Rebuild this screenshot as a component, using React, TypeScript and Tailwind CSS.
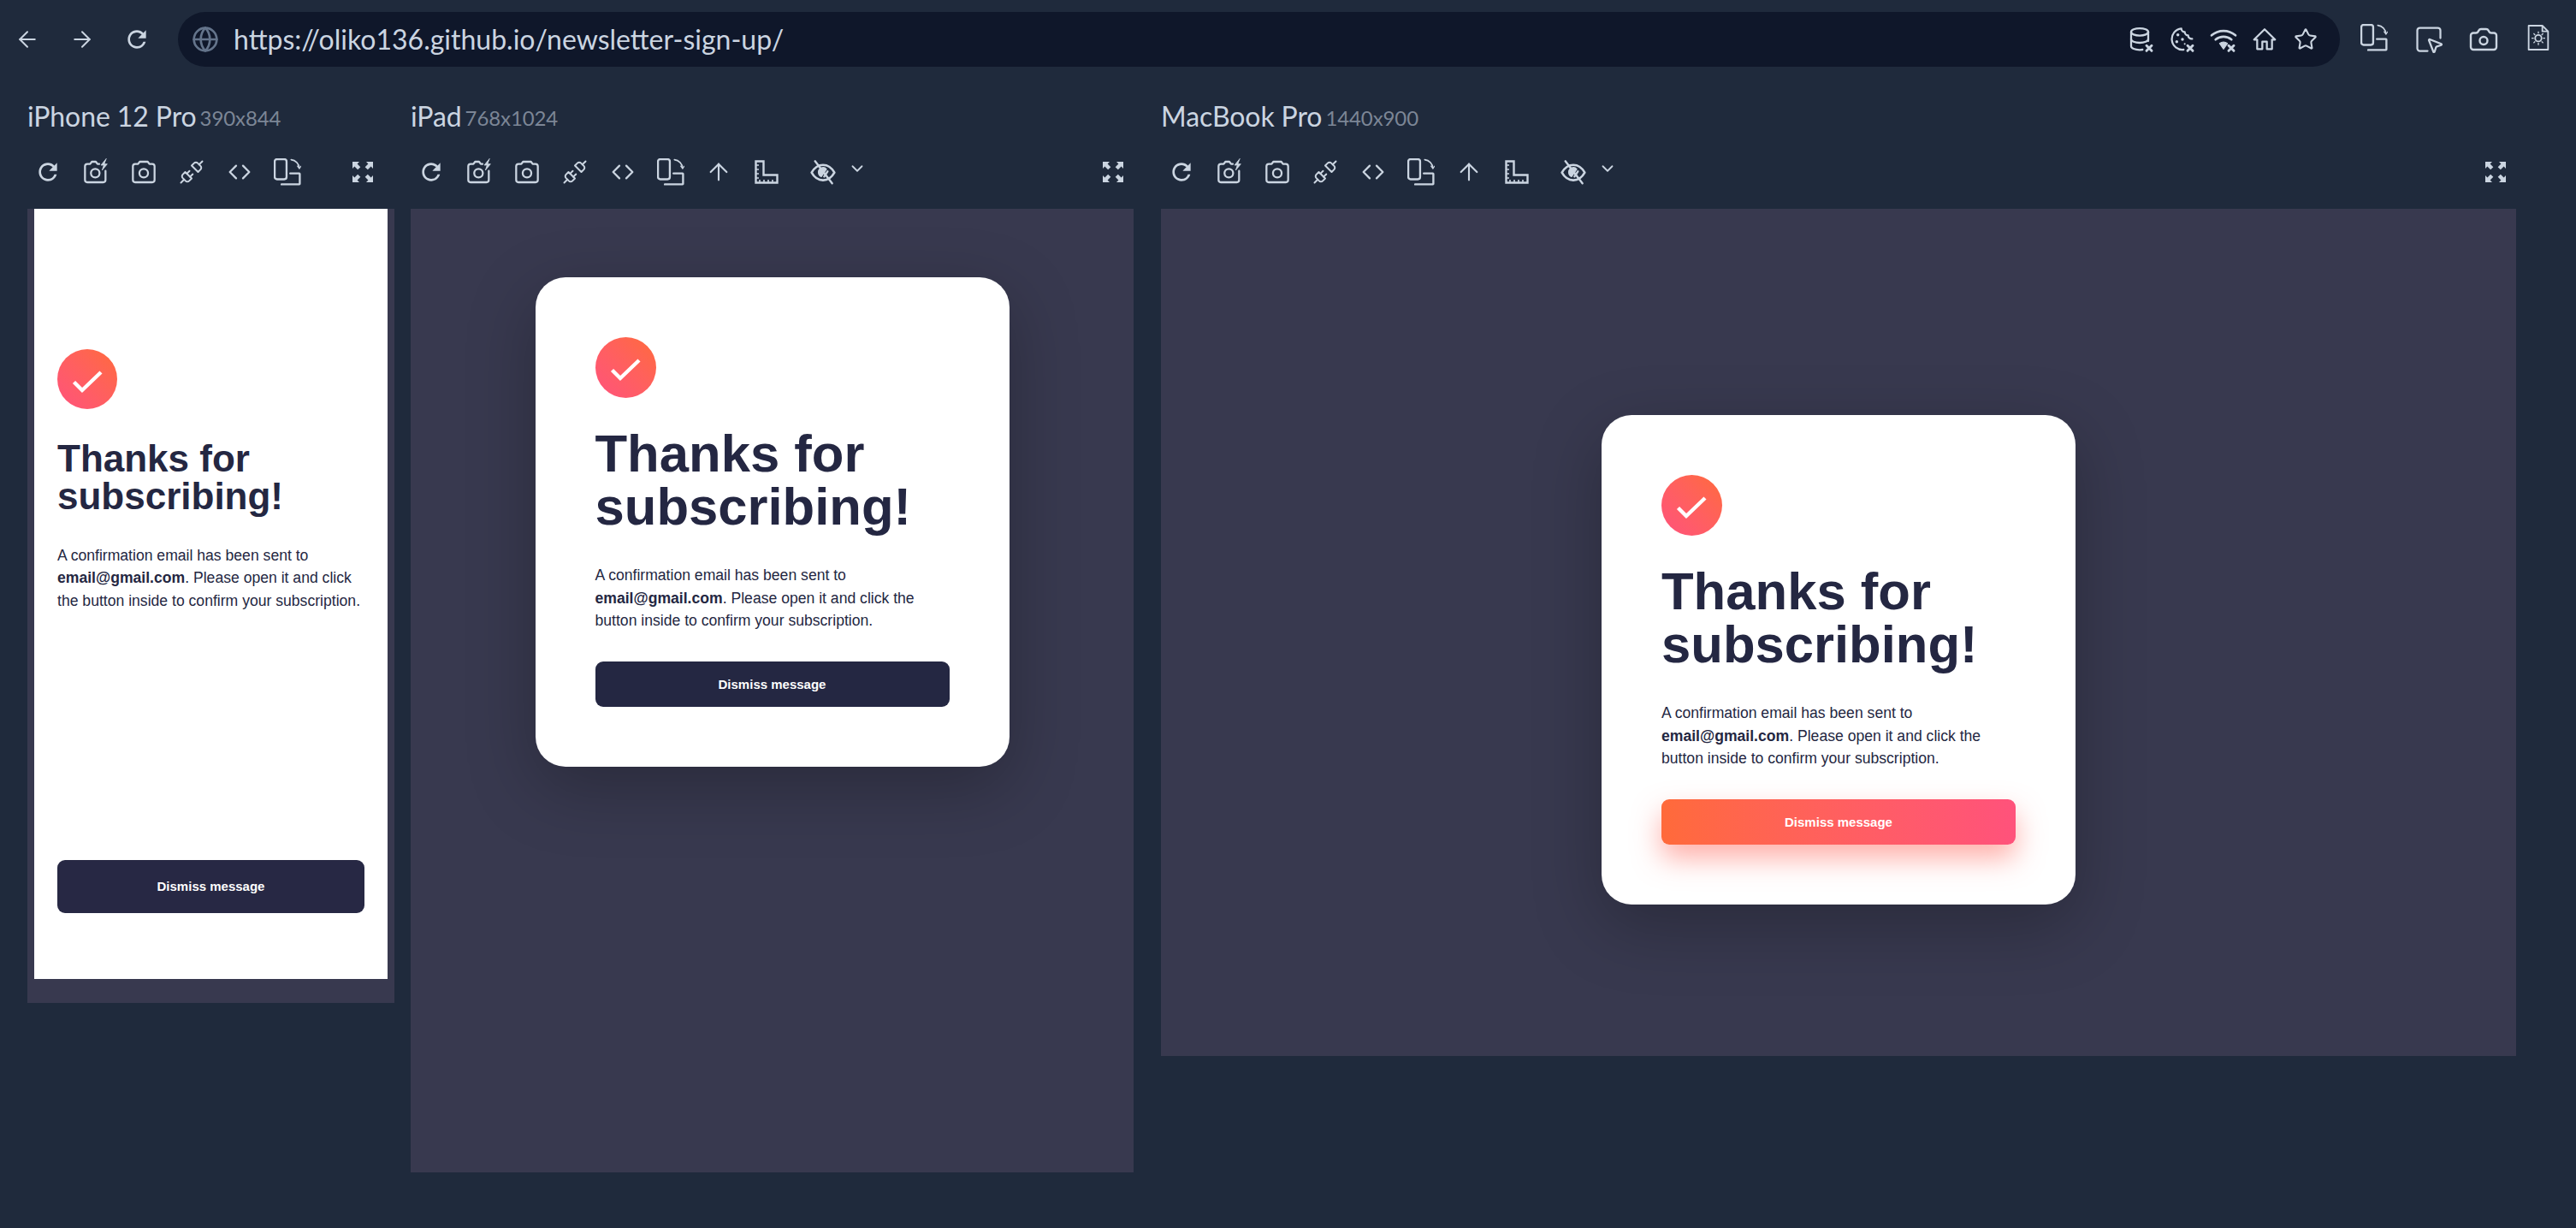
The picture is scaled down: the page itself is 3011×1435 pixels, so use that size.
import type { ReactNode } from "react";
import { ArrowLeft, ArrowRight, ArrowUp, Camera, ChevronDown, Globe, SquareMousePointer, Star, Unplug } from "lucide-react";
import { MdRefresh } from "react-icons/md";

const Svg = ({ size = 32, children }: { size?: number; children: ReactNode }) => (
  <svg
    width={size}
    height={size}
    viewBox="0 0 24 24"
    fill="none"
    stroke="currentColor"
    strokeWidth={1.7}
    strokeLinecap="round"
    strokeLinejoin="round"
  >
    {children}
  </svg>
);

const RemoveMark = () => <path d="M16.5 17.5l4.5 4.5m0-4.5L16.5 22" strokeWidth={2.2} />;

const CameraFlash = () => (
  <Svg>
    <path d="M15 5h-1.5L12 3h-3.500L7 5H4.500A2 2 0 0 0 2.500 7v12a2 2 0 0 0 2 2h14a2 2 0 0 0 2-2v-8" />
    <circle cx="11.500" cy="13" r="3.800" />
    <path d="M21 0.500 16.500 6H19l-1.500 4.500L22 5h-2.500z" fill="currentColor" strokeWidth={0.6} />
  </Svg>
);

const CameraTool = () => (
  <Svg>
    <path d="M4.500 5H7l1.500-2h7L17 5h2.500a2 2 0 0 1 2 2v12a2 2 0 0 1-2 2h-15a2 2 0 0 1-2-2V7a2 2 0 0 1 2-2Z" />
    <circle cx="12" cy="13" r="3.800" />
  </Svg>
);

const CodeIcon = () => (
  <Svg>
    <path d="M9 6.500 3.500 12 9 17.500" />
    <path d="M15 6.500l5.500 5.500-5.500 5.500" />
  </Svg>
);

const RotateDevice = ({ size = 32 }: { size?: number }) => (
  <svg width={size} height={size} viewBox="0 0 30 30" fill="none" stroke="currentColor" strokeWidth={2.2} strokeLinecap="round" strokeLinejoin="round">
    <rect x="1" y="1" width="13" height="22" rx="2.500" />
    <path d="M18 16.500h10a0.500 0.500 0 0 1 .5.5v11a0.500 0.500 0 0 1-.5.5H8.500" />
    <path d="M19 1.500a10 10 0 0 1 9 9.500" strokeWidth={1.5} />
    <path d="M26 8.500l2 2.500 2-2.500" strokeWidth={1.2} />
  </svg>
);

const RulerSquare = () => (
  <svg width="28" height="28" viewBox="0 0 28 28" fill="none" stroke="currentColor" strokeWidth={2.4} strokeLinejoin="miter">
    <path d="M1.500 1.500H10.500V17.500H26.500V26.500H1.500Z" />
    <path d="M2 6H5M2 11H5M2 16H5M2 21H5M6 26V23M11 26V23M16 26V23M21 26V23" strokeWidth={1.6} />
  </svg>
);

const EyeOff = () => (
  <Svg>
    <path d="M2 12.500C4.500 8 8 5.800 12 5.800S19.500 8 22 12.500C19.500 17 16 19.200 12 19.200S4.500 17 2 12.500Z" strokeWidth={2} />
    <path d="M8 12.500a4 4 0 0 1 7-3l-4.500 6.500a4 4 0 0 1-2.500-3.500Z" fill="currentColor" strokeWidth={1} />
    <path d="M13 16l3-4.500" strokeWidth={1.8} />
    <path d="M5 2.500l15 19.500" strokeWidth={1.8} />
  </Svg>
);

const Expand = () => (
  <svg width="32" height="32" viewBox="0 0 24 24" fill="currentColor" stroke="none">
    <path d="M3 3h6L7.200 4.800 10 7.600 7.600 10 4.800 7.200 3 9z" />
    <path d="M21 3h-6l1.800 1.800L14 7.600 16.400 10l2.800-2.800L21 9z" />
    <path d="M3 21h6l-1.800-1.800L10 16.400 7.600 14l-2.800 2.800L3 15z" />
    <path d="M21 21h-6l1.800-1.800-2.800-2.800 2.400-2.400 2.800 2.800L21 15z" />
  </svg>
);

const DatabaseRemove = () => (
  <Svg>
    <ellipse cx="10.500" cy="5.500" rx="7.500" ry="3.200" />
    <path d="M3 5.500v12.500c0 1.800 3.300 3.200 7.500 3.200l2.500-.2" />
    <path d="M18 5.500v8" />
    <path d="M3 11.800c0 1.800 3.300 3.200 7.500 3.200s7.500-1.400 7.500-3.200" />
    <RemoveMark />
  </Svg>
);

const CookieRemove = () => (
  <Svg>
    <path d="M11 2.500a3 3 0 0 0 3 3 3 3 0 0 0 3 3 3 3 0 0 0 3.500 3M13 21a9.300 9.300 0 1 1-2-18.500" />
    <g fill="currentColor" stroke="none">
      <circle cx="8" cy="8" r="1.300" />
      <circle cx="7" cy="14" r="1.300" />
      <circle cx="12" cy="12" r="1.300" />
      <circle cx="14" cy="16" r="0.800" />
    </g>
    <RemoveMark />
  </Svg>
);

const WifiRemove = () => (
  <Svg>
    <path d="M1.500 8.500a16 16 0 0 1 21 0" strokeWidth={2} />
    <path d="M5 12.200a11 11 0 0 1 14 0" strokeWidth={2} />
    <path d="M8.500 15.500a6 6 0 0 1 7 0l-3.500 5z" fill="currentColor" strokeWidth={0.8} />
    <RemoveMark />
  </Svg>
);

const HomeOutline = () => (
  <Svg>
    <path d="M12 3.200 2.800 12.200H5.500V20.500H10V14H14V20.500H18.500V12.200H21.200Z" />
  </Svg>
);

const FileSun = () => (
  <svg width="32" height="32" viewBox="0 0 24 24" fill="none" stroke="currentColor" strokeWidth={1.4} strokeLinejoin="round">
    <path d="M3.500 1.500h12l5 5v16h-17z" />
    <path d="M15.500 1.500v5h5" />
    <circle cx="12" cy="12.500" r="2.800" />
    <path d="M12 6.500v2M12 16.500v2M6 12.500h2M16 12.500h2M7.800 8.300l1.400 1.400M14.800 15.300l1.400 1.400M7.800 16.700l1.400-1.400M14.800 9.700l1.400-1.400" strokeWidth={1} />
  </svg>
);

const CheckCircle = ({ className }: { className: string }) => (
  <div className={className}>
    <svg width="71" height="71" viewBox="0 0 71 71" fill="none">
      <path d="M19.500 38.500 29 48 51 27" stroke="white" strokeWidth={4.4} />
    </svg>
  </div>
);

function RefreshTool() {
  return <MdRefresh size={32} />;
}

function PlugTool() {
  return <Unplug size={30} strokeWidth={1.6} />;
}

const tools = [RefreshTool, CameraFlash, CameraTool, PlugTool, CodeIcon, RotateDevice];

const ToolBtn = ({ children }: { children: ReactNode }) => (
  <div className="flex h-11 w-14 shrink-0 items-center justify-center">{children}</div>
);

const Toolbar = ({ wide, expandClass }: { wide?: boolean; expandClass: string }) => (
  <div className="-ml-1 mb-[21px] flex h-11 items-center text-[#cbd5e1]">
    {tools.map((Tool, i) => (
      <ToolBtn key={i}>
        <Tool />
      </ToolBtn>
    ))}
    {wide && (
      <>
        <ToolBtn>
          <ArrowUp size={32} strokeWidth={1.6} />
        </ToolBtn>
        <ToolBtn>
          <RulerSquare />
        </ToolBtn>
        <div className="ml-[10px] flex h-11 w-14 shrink-0 items-center justify-center">
          <EyeOff />
        </div>
        <div className="-mt-2 flex w-6 shrink-0 items-center justify-center">
          <ChevronDown size={22} strokeWidth={2} />
        </div>
      </>
    )}
    <div className={expandClass}>
      <Expand />
    </div>
  </div>
);

const Label = ({ name, size }: { name: string; size: string }) => (
  <div className="mb-[2px] mt-[2px] flex h-[83px] items-center gap-[4px] whitespace-nowrap font-['Lato',sans-serif]">
    <span className="text-[32px] leading-none tracking-[-0.1px] text-[#cbd5e1]">{name}</span>
    <span className="mt-1 text-[24px] leading-none tracking-[-0.1px] text-[#7c8696]">{size}</span>
  </div>
);

const Message = () => (
  <>
    A confirmation email has been sent to <strong className="font-bold">email@gmail.com</strong>. Please open it and
    click the button inside to confirm your subscription.
  </>
);

const Card = ({ accent }: { accent?: boolean }) => (
  <div className="flex h-[572px] w-[554px] shrink-0 flex-col rounded-[35px] bg-white p-[70px] pb-0 text-[#242742] shadow-[0_24px_80px_rgba(0,0,0,0.25)]">
    <CheckCircle className="h-[71px] w-[71px] rounded-full bg-gradient-to-bl from-[#ff6a3a] to-[#ff527b]" />
    <h1 className="mt-[34px] text-[61.6px] font-bold leading-[61.6px]">Thanks for subscribing!</h1>
    <p className="mt-[37px] text-[17.6px] leading-[26.4px]">
      <Message />
    </p>
    <div
      className={
        accent
          ? "mt-[35px] flex h-[53px] items-center justify-center rounded-[9px] bg-gradient-to-r from-[#ff6a3a] to-[#ff527b] text-[15px] font-bold text-white shadow-[0_16px_32px_rgba(255,97,85,0.5)]"
          : "mt-[35px] flex h-[53px] items-center justify-center rounded-[9px] bg-[#242742] text-[15px] font-bold text-white"
      }
    >
      Dismiss message
    </div>
  </div>
);

export default function App() {
  return (
    <div className="flex h-[1435px] w-[3011px] flex-col overflow-hidden bg-[#1f2a3c] font-['Liberation_Sans',sans-serif]">
      <header className="flex h-[92px] shrink-0 items-center pr-3 text-[#cbd5e1]">
        <div className="flex h-16 w-16 items-center justify-center">
          <ArrowLeft size={30} strokeWidth={1.6} />
        </div>
        <div className="flex h-16 w-16 items-center justify-center">
          <ArrowRight size={30} strokeWidth={1.6} />
        </div>
        <div className="flex h-16 w-16 items-center justify-center">
          <MdRefresh size={32} />
        </div>
        <div className="ml-4 flex h-16 flex-1 items-center rounded-full bg-[#0f172a] pl-4 pr-4">
          <Globe size={32} strokeWidth={2} className="text-[#64748b]" />
          <span className="ml-[17px] font-['Lato',sans-serif] text-[32px] text-[#cbd5e1]">
            https://oliko136.github.io/newsletter-sign-up/
          </span>
          <div className="ml-auto flex">
            <div className="flex w-12 justify-center">
              <DatabaseRemove />
            </div>
            <div className="flex w-12 justify-center">
              <CookieRemove />
            </div>
            <div className="flex w-12 justify-center">
              <WifiRemove />
            </div>
            <div className="flex w-12 justify-center">
              <HomeOutline />
            </div>
            <div className="flex w-12 items-center justify-center">
              <Star size={28} strokeWidth={1.8} />
            </div>
          </div>
        </div>
        <div className="ml-2 flex">
          <div className="flex w-16 justify-center">
            <RotateDevice />
          </div>
          <div className="flex w-16 justify-center">
            <SquareMousePointer size={36} strokeWidth={1.5} />
          </div>
          <div className="flex w-16 justify-center">
            <Camera size={36} strokeWidth={1.6} />
          </div>
          <div className="flex w-16 justify-center">
            <FileSun />
          </div>
        </div>
      </header>

      <main className="flex flex-1 items-start pl-8">
        <section className="w-[429px] shrink-0">
          <Label name="iPhone 12 Pro" size="390x844" />
          <Toolbar expandClass="ml-auto mr-[21px] flex h-11 w-8 items-center justify-center" />
          <div className="h-[928px] bg-[#38394f] px-2">
            <div className="flex h-[900px] flex-col bg-white px-[27px] pb-[77px] pt-[164px] text-[#242742]">
              <CheckCircle className="h-[70px] w-[70px] rounded-full bg-gradient-to-bl from-[#ff6a3a] to-[#ff527b]" />
              <h1 className="mt-9 text-[44px] font-bold leading-[44px]">Thanks for subscribing!</h1>
              <p className="mt-[34px] text-[17.6px] leading-[26.4px]">
                <Message />
              </p>
              <div className="mt-auto flex h-[62px] items-center justify-center rounded-[9px] bg-[#272844] text-[15px] font-bold text-white">
                Dismiss message
              </div>
            </div>
          </div>
        </section>

        <section className="ml-[19px] w-[845px] shrink-0">
          <Label name="iPad" size="768x1024" />
          <Toolbar wide expandClass="ml-auto mr-2 flex h-11 w-8 items-center justify-center" />
          <div className="flex h-[1126px] justify-center bg-[#38394f] pt-20">
            <Card />
          </div>
        </section>

        <section className="ml-8 w-[1584px] shrink-0">
          <Label name="MacBook Pro" size="1440x900" />
          <Toolbar wide expandClass="ml-auto mr-2 flex h-11 w-8 items-center justify-center" />
          <div className="flex h-[990px] justify-center bg-[#38394f] pt-[241px]">
            <Card accent />
          </div>
        </section>
      </main>
    </div>
  );
}
